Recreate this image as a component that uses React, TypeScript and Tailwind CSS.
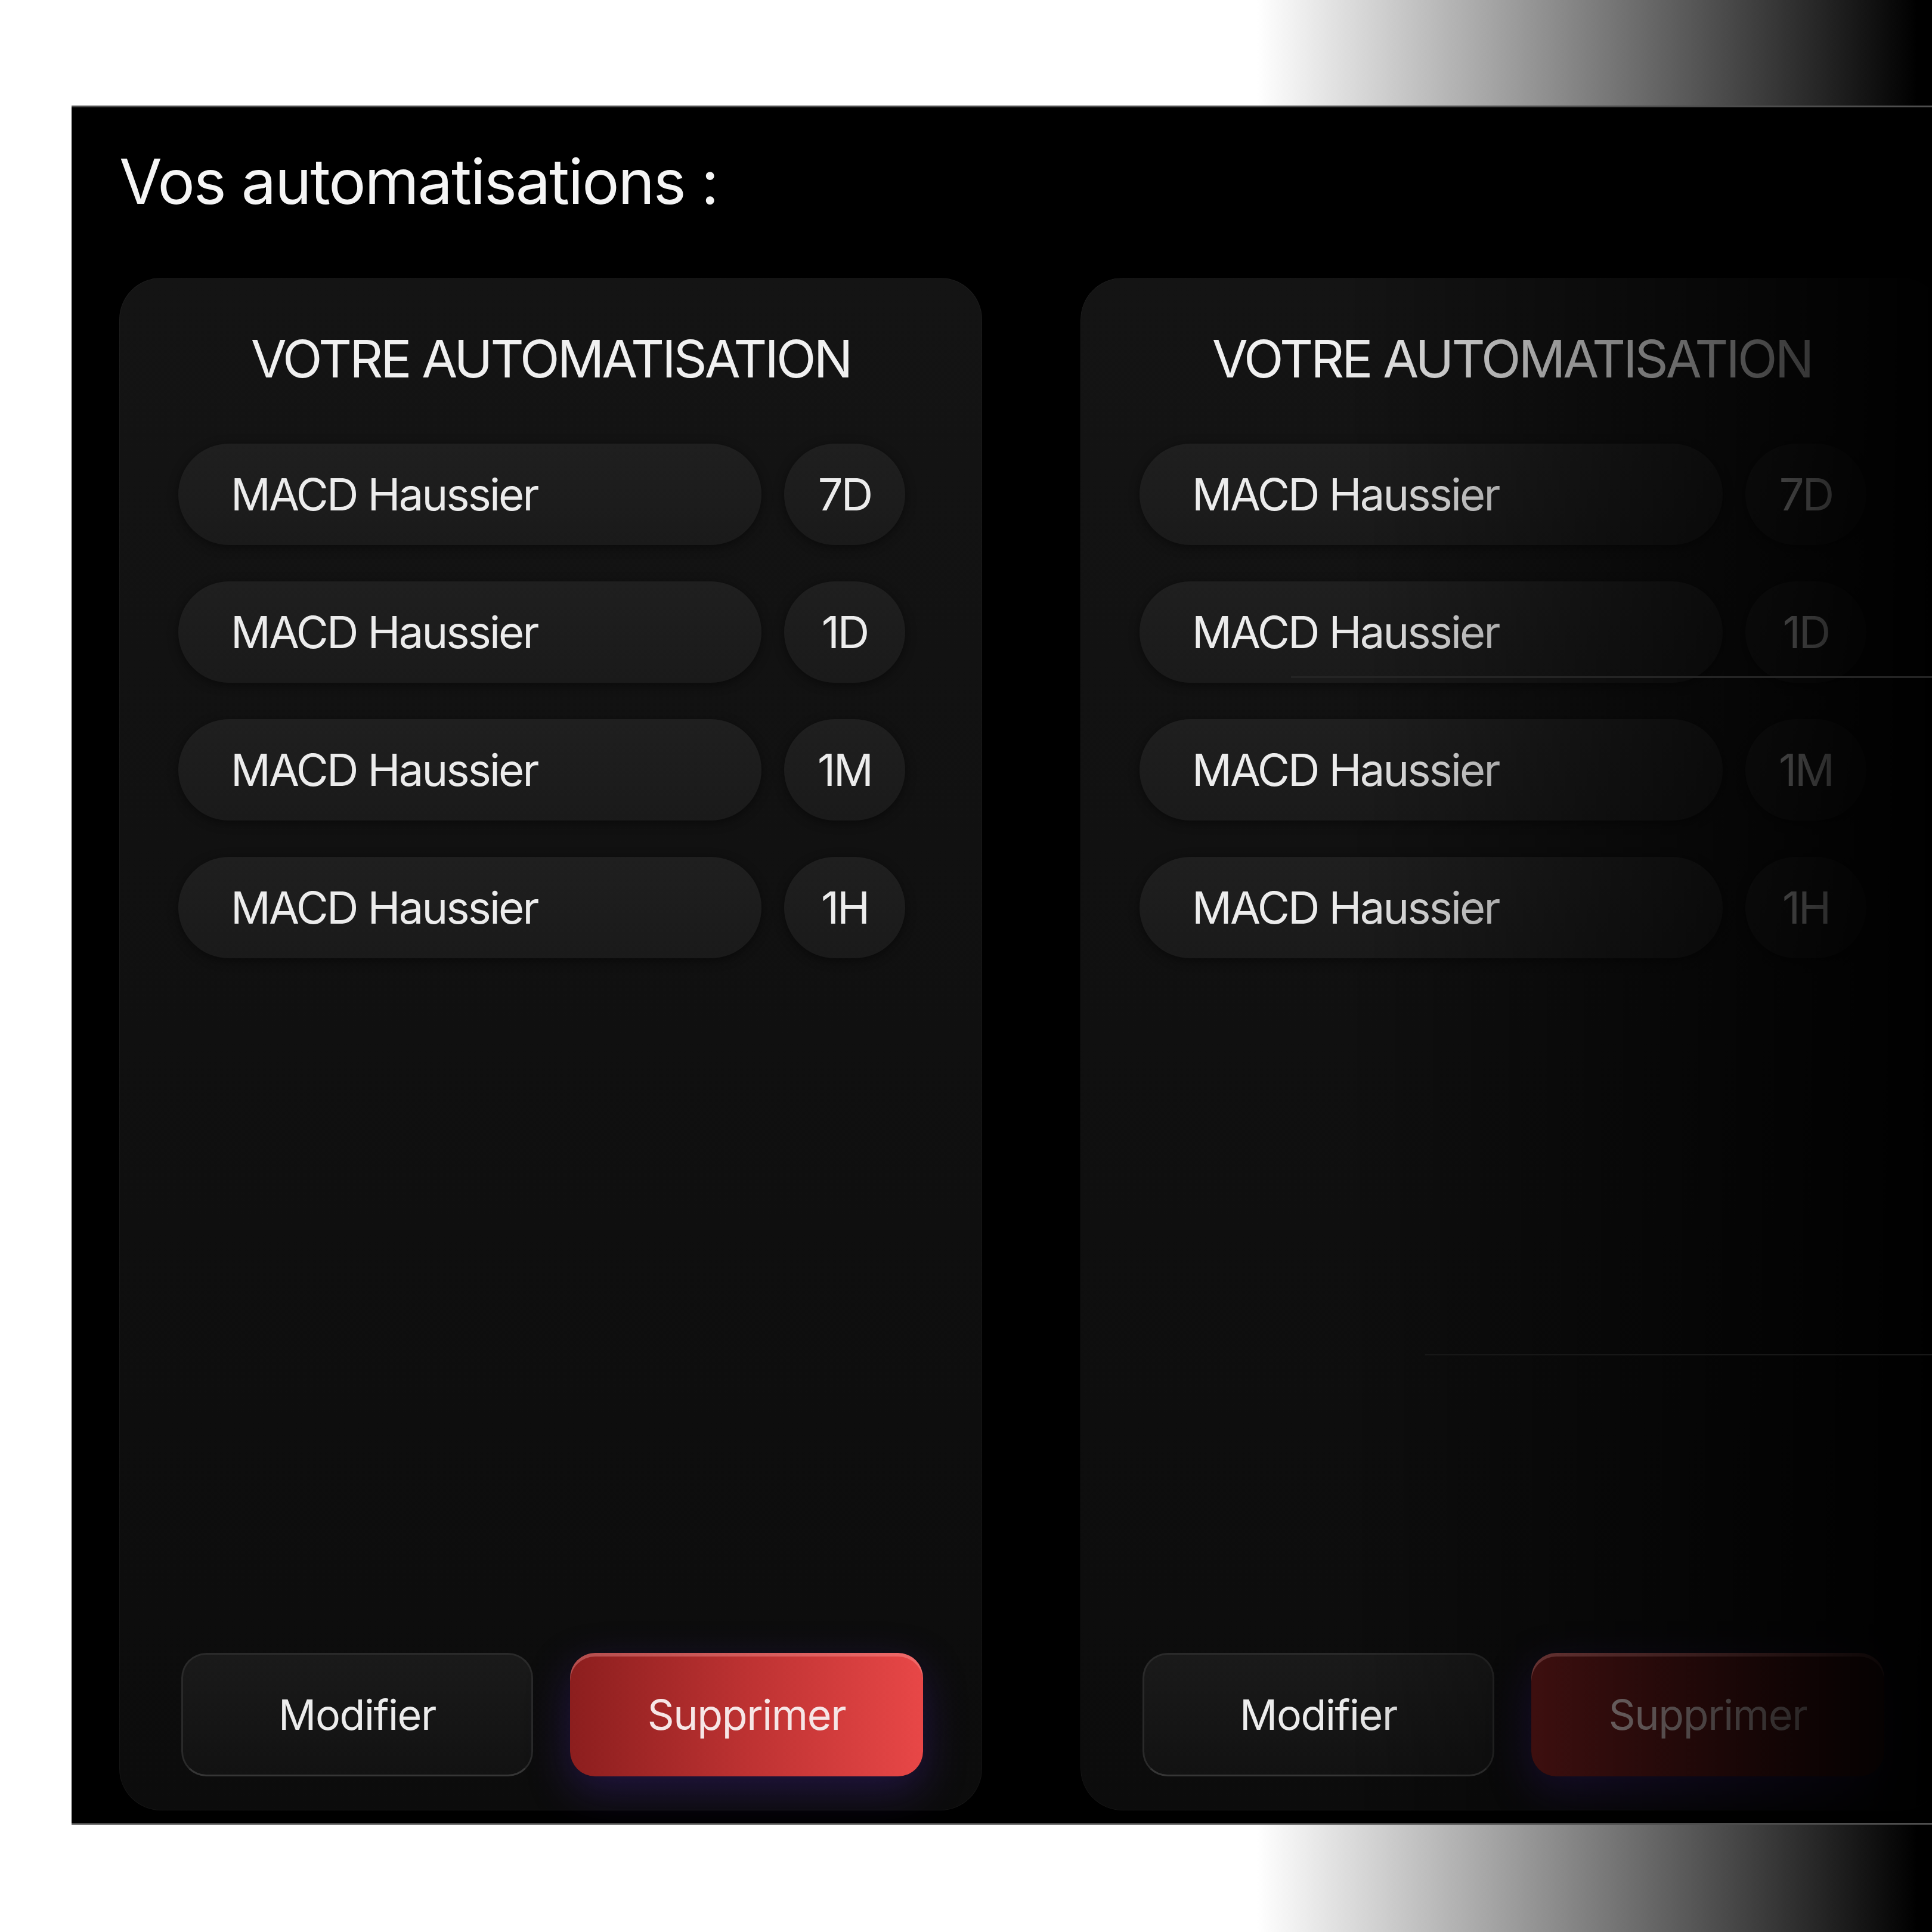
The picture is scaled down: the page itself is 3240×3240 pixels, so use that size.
import React from 'react';

type Rule = { label: string; period: string };

const rules: Rule[] = [
  { label: 'MACD Haussier', period: '7D' },
  { label: 'MACD Haussier', period: '1D' },
  { label: 'MACD Haussier', period: '1M' },
  { label: 'MACD Haussier', period: '1H' },
];

function RuleRow({ rule }: { rule: Rule }) {
  return (
    <div className="flex h-[170px] items-center gap-[38px]">
      <div className="flex h-full w-[978px] items-center rounded-full bg-gradient-to-b from-[#1f1f1f] to-[#1a1a1a] pl-[88px] shadow-[0_4px_18px_rgba(0,0,0,0.45)]">
        <span className="text-[74px] leading-none tracking-[-0.038em] text-[#ececec]">
          {rule.label}
        </span>
      </div>
      <div className="flex h-full w-[203px] items-center justify-center rounded-full bg-gradient-to-b from-[#1f1f1f] to-[#1a1a1a] shadow-[0_4px_18px_rgba(0,0,0,0.45)]">
        <span className="text-[74px] leading-none tracking-[-0.04em] text-[#ececec]">
          {rule.period}
        </span>
      </div>
    </div>
  );
}

function AutomationCard({ faded = false }: { faded?: boolean }) {
  return (
    <div
      className={`flex h-[2570px] w-[1447px] shrink-0 flex-col rounded-[70px] border border-white/[0.04] bg-gradient-to-b from-[#141414] to-[#0c0c0c] pb-[56px] pl-[98px] pr-[98px] pt-[91px] ${
        faded
          ? '[mask-image:linear-gradient(to_right,#000_30%,transparent_100%)]'
          : ''
      }`}
    >
      <h2 className="text-center text-[87px] leading-none tracking-[-0.045em] text-[#f0f0f0]">
        VOTRE AUTOMATISATION
      </h2>
      <div className="mt-[99px] flex flex-col gap-[61px]">
        {rules.map((rule, i) => (
          <RuleRow key={i} rule={rule} />
        ))}
      </div>
      <div className="mt-auto flex gap-[62px] pl-[5px]">
        <button
          type="button"
          className="flex h-[207px] w-[591px] items-center justify-center rounded-[42px] border-[3px] border-[#2a2a2a] border-b-[#363636] bg-gradient-to-b from-[#1a1a1a] to-[#121212] text-[70px] leading-none tracking-[-0.02em] text-[#ececec]"
        >
          Modifier
        </button>
        <button
          type="button"
          className={`flex h-[207px] w-[593px] items-center justify-center rounded-[42px] text-[70px] leading-none tracking-[-0.02em] shadow-[inset_0_6px_0_rgba(255,170,170,0.35),0_24px_70px_rgba(60,30,130,0.45)] ${
            faded
              ? 'bg-gradient-to-r from-[#5a1616] via-[#4e1414] to-[#3a0f0f] text-[#b9a6a6]'
              : 'bg-gradient-to-r from-[#8c1e1e] via-[#bd3232] to-[#e84747] text-[#f6e6e6]'
          }`}
        >
          Supprimer
        </button>
      </div>
    </div>
  );
}

export default function App() {
  return (
    <div
      className="flex h-[3240px] w-[3240px] flex-col overflow-hidden bg-[linear-gradient(to_right,#ffffff_0px,#ffffff_2108px,#000000_3215px)]"
      style={{ fontFamily: 'Inter, "Liberation Sans", sans-serif' }}
    >
      <div className="h-[177px] shrink-0" />
      <div className="relative ml-[120px] flex h-[2883px] shrink-0 flex-col overflow-hidden border-y-[3px] border-[rgba(128,128,128,0.6)] bg-black pl-[80px] pt-[72px]">
        <h1 className="text-[104px] leading-none tracking-[-0.02em] text-[#f5f5f5]">
          Vos automatisations :
        </h1>
        <div className="mt-[110px] flex gap-[165px]">
          <AutomationCard />
          <AutomationCard faded />
        </div>
        <div className="absolute left-[2045px] right-0 top-[954px] h-[3px] bg-[#242424]" />
        <div className="absolute left-[2270px] right-0 top-[2091px] h-[2px] bg-[#171717]" />
      </div>
    </div>
  );
}
